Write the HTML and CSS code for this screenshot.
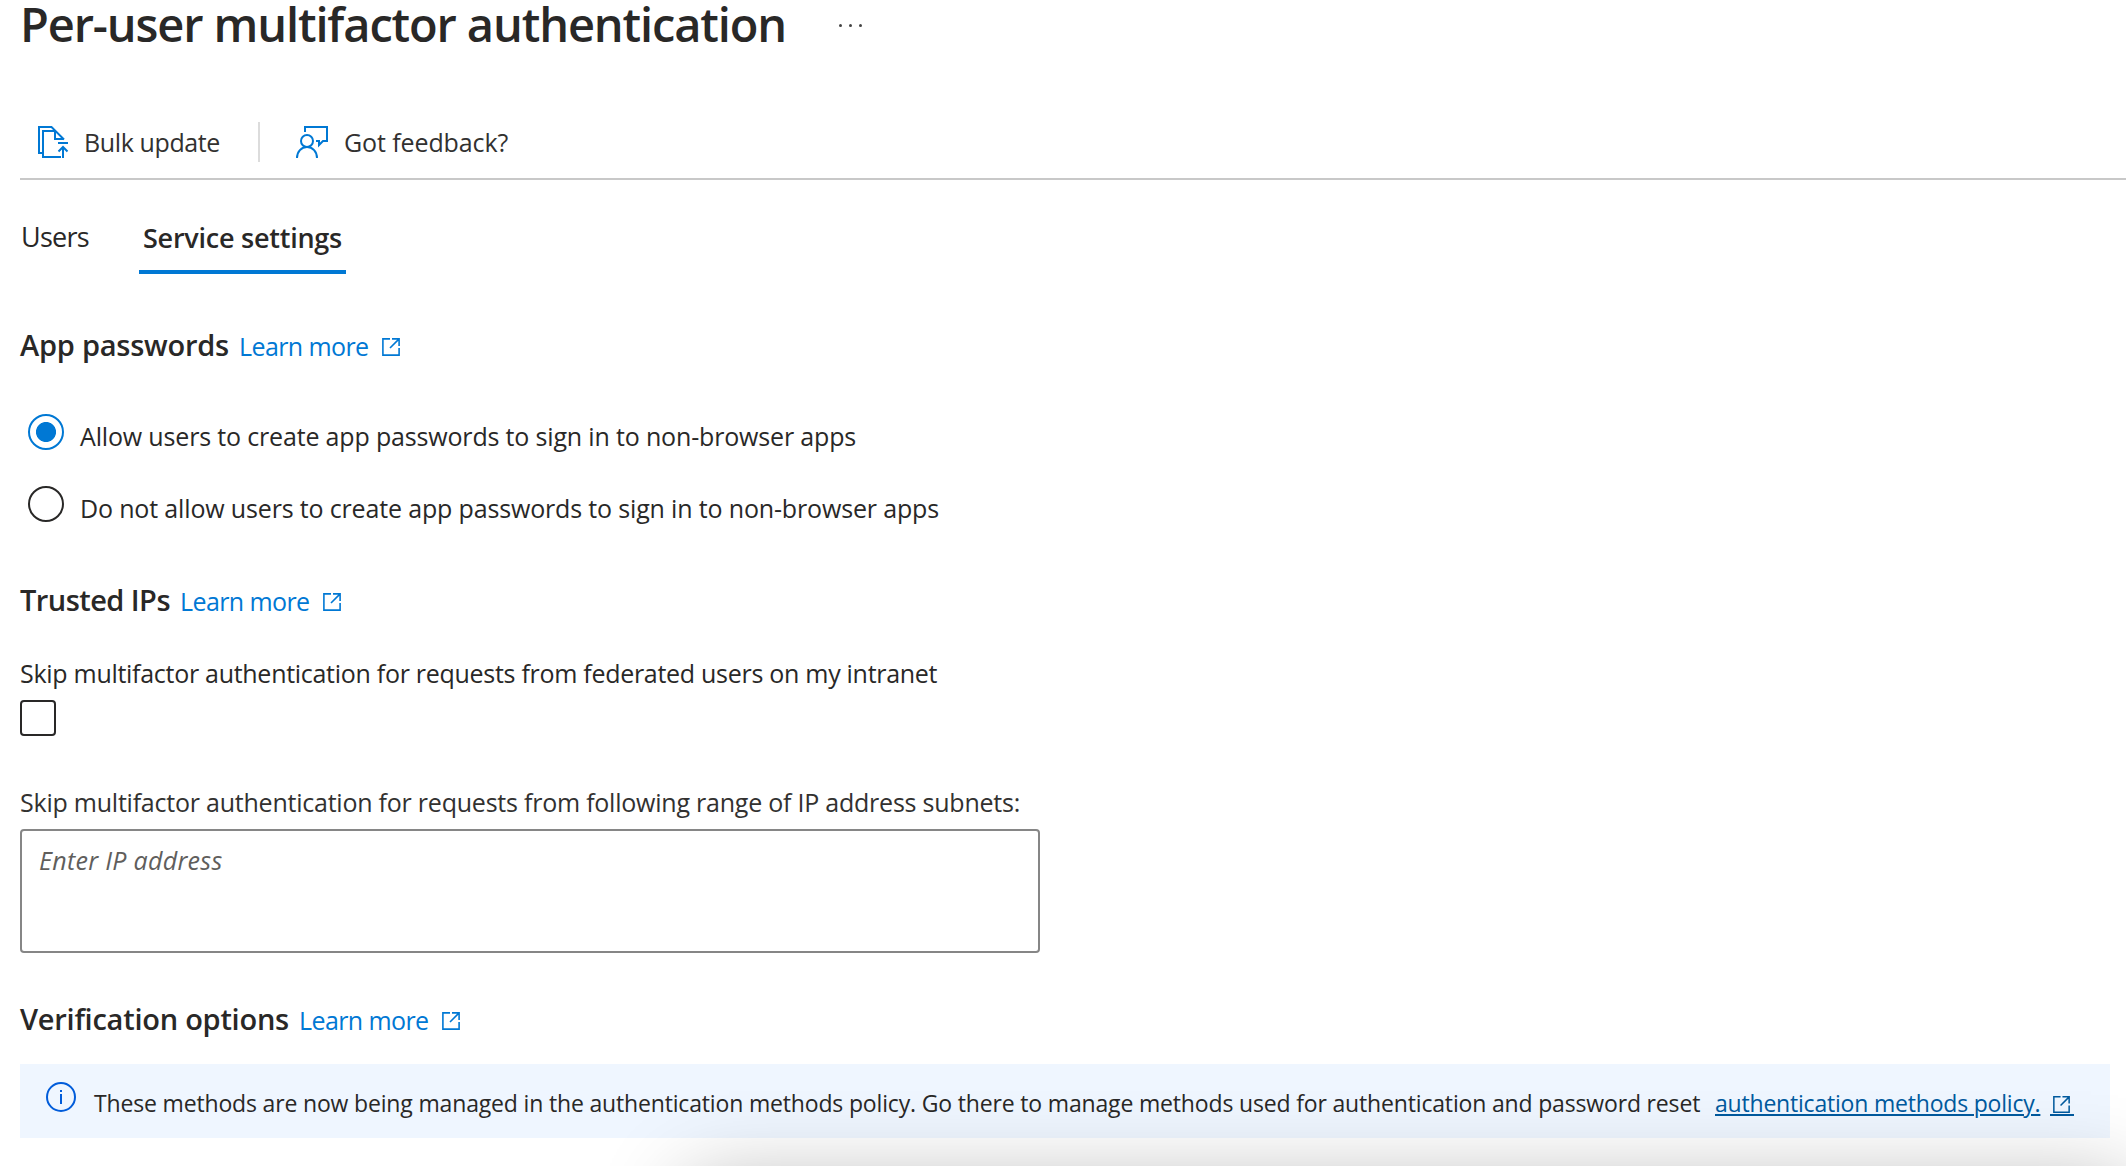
FILE: index.html
```
<!DOCTYPE html>
<html lang="en">
<head>
<meta charset="utf-8">
<title>Per-user multifactor authentication</title>
<link rel="stylesheet" href="styles.css">
</head>
<body>
<svg class="defs" aria-hidden="true">
  <symbol id="external" viewBox="0 0 18 18">
    <path d="M8 .9H.9v16.200H17.100V10M10 .9H17.100V8M17.100 .9L8 10" fill="none" stroke="currentColor" stroke-width="1.6"/>
  </symbol>
</svg>
<main class="page">
  <header class="title-row">
    <h1 class="title">Per-user multifactor authentication</h1>
    <div class="more" role="button" aria-label="More"><i></i><i></i><i></i></div>
  </header>

  <div class="toolbar">
    <div class="command">
      <svg class="icon-bulk" width="32" height="32" viewBox="0 0 32 32" fill="none" stroke="currentColor" stroke-width="2">
        <path d="M5 27H1V1h12.500L26 13.500"/>
        <path d="M23 31H5V5h11.500M17 4v9h8.500"/>
        <path d="M20 17h10M25 32V21M20.500 25.500L25 21l4.500 4.500"/>
      </svg>
      <span class="t-bulk">Bulk update</span>
    </div>
    <div class="divider"></div>
    <div class="command">
      <svg class="icon-feedback" width="33" height="32" viewBox="0 0 33 32" fill="none" stroke="currentColor" stroke-width="2">
        <path d="M9 6V1h22v14h-4l-4 4v-4h-3"/>
        <circle cx="11" cy="15" r="6"/>
        <path d="M1 32c0-6.500 4.400-11 10-11s10 4.500 10 11"/>
      </svg>
      <span class="t-feedback">Got feedback?</span>
    </div>
  </div>

  <nav class="tabs">
    <div class="tab tab-users">Users</div>
    <div class="tab tab-active">Service settings</div>
  </nav>

  <section class="section section-app">
    <div class="heading">
      <h2 class="t-app">App passwords</h2>
      <a class="learn">Learn more<svg class="ext" width="18" height="18"><use href="#external"/></svg></a>
    </div>
    <div class="radios">
      <div class="radio">
        <span class="circle checked"></span>
        <span class="t-allow">Allow users to create app passwords to sign in to non-browser apps</span>
      </div>
      <div class="radio">
        <span class="circle"></span>
        <span class="t-deny">Do not allow users to create app passwords to sign in to non-browser apps</span>
      </div>
    </div>
  </section>

  <section class="section">
    <div class="heading">
      <h2 class="t-trusted">Trusted IPs</h2>
      <a class="learn">Learn more<svg class="ext" width="18" height="18"><use href="#external"/></svg></a>
    </div>
    <div class="label label-federated">Skip multifactor authentication for requests from federated users on my intranet</div>
    <div class="checkbox" role="checkbox" aria-checked="false"></div>
    <div class="label label-range">Skip multifactor authentication for requests from following range of IP address subnets:</div>
    <div class="textbox"><span class="placeholder">Enter IP address</span></div>
  </section>

  <section class="section section-verify">
    <div class="heading">
      <h2 class="t-verify">Verification options</h2>
      <a class="learn">Learn more<svg class="ext" width="18" height="18"><use href="#external"/></svg></a>
    </div>
    <div class="banner">
      <svg class="info" width="30" height="30" viewBox="0 0 30 30">
        <circle cx="15" cy="15" r="14" fill="none" stroke="currentColor" stroke-width="2"/>
        <path d="M14 8h2v2h-2zM14 12h2v10h-2z" fill="currentColor"/>
      </svg>
      <span class="banner-text">These methods are now being managed in the authentication methods policy. Go there to manage methods used for authentication and password reset</span>
      <a class="policy"><span class="policy-text">authentication methods policy.</span><span class="policy-icon"><svg width="17" height="17"><use href="#external"/></svg></span></a>
    </div>
  </section>
</main>
<div class="overlay-shadow"></div>
</body>
</html>
```
FILE: styles.css
```
* { box-sizing: border-box; }
body {
  margin: 0;
  height: 1166px;
  position: relative;
  overflow: hidden;
  background: #fff;
  color: #292827;
  font-family: "Open Sans", "Noto Sans", sans-serif;
  font-size: 25px;
  line-height: 40px;
  white-space: nowrap;
}
h1, h2 { margin: 0; font-weight: 600; }
.defs { position: absolute; width: 0; height: 0; }
.page { padding-left: 20px; }

.title-row { display: flex; height: 48px; }
.title { width: 816px; font-size: 47px; line-height: 48px; letter-spacing: -1.13px; }
.more { display: flex; gap: 7px; padding: 24px 0 0 3px; }
.more i { width: 3px; height: 3px; border-radius: 50%; background: #444; }

.toolbar { display: flex; margin-top: 74px; height: 58px; padding: 0 0 16px 18px; border-bottom: 2px solid #c8c8c8; color: #323130; }
.command { display: flex; }
.command svg { color: #0078d4; flex: none; margin-top: 4px; }
.icon-bulk { margin-right: 14px; }
.icon-feedback { margin-right: 15px; }
.t-bulk { width: 136px; letter-spacing: -.38px; }
.t-feedback { letter-spacing: -.1px; }
.divider { width: 2px; margin: 0 36px 0 38px; background: #dcdcdc; }

.tabs { display: flex; height: 94px; padding-top: 38px; font-size: 27px; }
.tab-users { width: 119px; padding-left: 1px; line-height: 38px; letter-spacing: -.72px; }
.tab-active { width: 207px; height: 56px; padding-left: 4px; border-bottom: 4px solid #0078d4; font-weight: 600; letter-spacing: -.24px; }

.section { padding-top: 50px; }
.section-app { padding-top: 51px; }
.heading { display: flex; align-items: baseline; height: 40px; }
.heading h2 { font-size: 29px; }
.t-app { width: 219px; letter-spacing: -.23px; }
.t-trusted { width: 160px; letter-spacing: -.55px; }
.t-verify { width: 279px; letter-spacing: -.25px; }
.learn { color: #0078d4; letter-spacing: -.6px; }
.ext { margin-left: 14px; }

.radios { display: flex; flex-direction: column; gap: 28px; padding: 49px 0 0 8px; }
.radio { display: flex; height: 44px; line-height: 44px; }
.circle { width: 36px; height: 36px; margin-right: 16px; border: 2px solid #292827; border-radius: 50%; }
.checked { border-color: #0078d4; background: radial-gradient(circle, #0078d4 9.600px, transparent 10.400px); }
.t-allow { letter-spacing: -.166px; }
.t-deny { letter-spacing: -.158px; }

.label-federated { margin-top: 33px; letter-spacing: -.285px; }
.checkbox { width: 36px; height: 36px; margin-top: 7px; border: 2px solid #292827; border-radius: 4px; }
.label-range { margin-top: 46px; letter-spacing: -.228px; color: #323130; }
.textbox { width: 1020px; height: 124px; margin-top: 7px; padding: 9px 17px; border: 2px solid #868686; border-radius: 4px; }
.placeholder { color: #605e5c; font-style: italic; letter-spacing: .3px; }

.section-verify { padding-top: 46px; }
.banner { display: flex; width: 2090px; height: 74px; margin-top: 25px; padding: 19px 0 0 26px; background: #eff6ff; font-size: 23px; }
.info { flex: none; margin: -1px 18px 0 0; color: #015cda; }
.banner-text { width: 1621px; letter-spacing: -.165px; }
.policy { display: flex; color: #005a9e; }
.policy-text { width: 335px; letter-spacing: -.2px; text-decoration: underline; text-decoration-thickness: 2px; text-underline-offset: 2px; }
.policy-icon { width: 24px; height: 33px; padding: 0 3px; border-bottom: 2px solid #005a9e; }
.policy-icon svg { display: block; margin-top: 13px; }

/* soft shadow cast by the panel that sits below the viewport */
.overlay-shadow { position: absolute; left: 0; right: 0; bottom: 0; height: 126px; overflow: hidden; pointer-events: none; }
.overlay-shadow::before { content: ""; position: absolute; left: 688px; top: 144px; width: 1444px; height: 300px; box-shadow: 0 0 82px rgba(0, 0, 0, .3); }
```
